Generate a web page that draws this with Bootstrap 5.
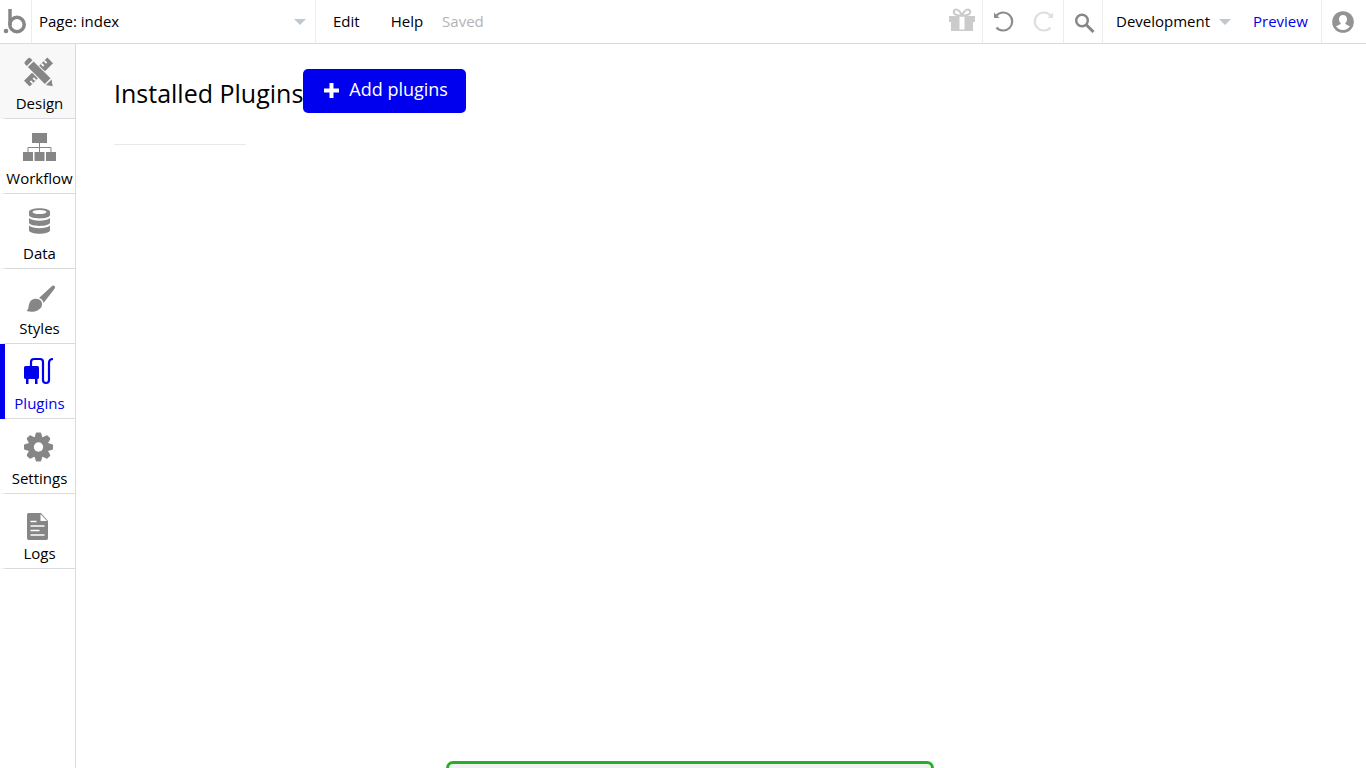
<!DOCTYPE html>
<html lang="en">
<head>
<meta charset="utf-8">
<meta name="viewport" content="width=device-width, initial-scale=1">
<title>Plugins</title>
<link href="https://cdn.jsdelivr.net/npm/bootstrap@5.3.0/dist/css/bootstrap.min.css" rel="stylesheet">
<style>
  :root { --line: #d9dbdc; --soft: #ebeef0; --ink: #868686; --accent: #0000ee; }
  body { font-family: "Open Sans", sans-serif; font-size: 15px; line-height: 20px; color: #000; background: #fff; }
  a { text-decoration: none; color: #000; }
  svg { display: block; flex: none; }
  .topbar { height: 44px; border-bottom: 1px solid var(--line); }
  .cell { height: 100%; display: flex; align-items: center; border-right: 1px solid var(--soft); }
  .plain { border: 0; background: none; padding: 0; color: #000; }
  .logo { width: 32px; padding: 0 0 2px 3px; }
  .picker { width: 284px; }
  .env { width: 128px; padding-left: 13px; }
  .picker select, .env select { appearance: none; border: 0; background: none; width: 100%; height: 100%; padding: 0 0 2px; color: #000; outline: 0; }
  .picker select { padding-left: 7px; }
  .picker svg { right: 9px; }
  .env svg { right: 0; }
  .caret { top: 19px; pointer-events: none; }
  .menu { gap: 31px; padding: 0 0 2px 17px; }
  .saved { color: #b3b3b3; margin-left: 19px; padding-bottom: 2px; }
  .gift { width: 42px; padding: 0 0 3px 8px; }
  .history { width: 81px; padding: 0 0 2px 10px; gap: 19px; }
  .search { width: 39px; padding: 2px 0 0 10px; }
  .preview { color: var(--accent); width: 91px; padding: 0 0 2px 22px; }
  .account { width: 44px; padding-left: 10px; border: 0; }
  .side { width: 76px; border-right: 1px solid var(--line); }
  .tab { height: 75px; display: flex; flex-direction: column; align-items: center; justify-content: space-between; padding: 11px 0 6px 4px; color: #000; fill: var(--ink);
    background: linear-gradient(90deg, #fff, var(--line) 6px) bottom / 100% 1px no-repeat; }
  .tab svg { width: 36px; height: 36px; margin-right: 1px; }
  .tab.hovered { background-color: #f8f8f8; }
  .tab.current { color: var(--accent); fill: var(--accent); box-shadow: inset 5px 0 var(--accent); }
  .content-pane { padding: 25px 38px; }
  h1 { font-size: 25px; line-height: 34px; font-weight: 400; margin: 0; padding-top: 7px; }
  .add { background: var(--accent); color: #fff; height: 44px; border: 0; border-radius: 5px; font-size: 18px; line-height: 24px; padding: 8px 18px 12px 21px; gap: 10px; }
  .add:hover { background: #0000cc; color: #fff; }
  .add svg { margin-top: 2px; }
  .rule { width: 132px; border: 0; border-top: 1px solid #e9e9e9; opacity: 1; margin: 31px 0 0; }
  .notice { width: 488px; height: 7px; left: 446px; border: 3px solid #27ae27; border-bottom: 0; border-radius: 8px 8px 0 0; background: #f0f0f0; }
</style>
</head>
<body class="d-flex flex-column min-vh-100">
<header class="topbar d-flex align-items-center">
  <a class="cell logo" href="#" aria-label="Home">
    <svg width="24" height="26" viewBox="0 0 24 26"><path d="M7 1v16" stroke="#868686" stroke-width="3.500"/><circle cx="14" cy="16.500" r="7.200" stroke="#868686" stroke-width="3.500" fill="none"/><circle cx="3" cy="23" r="2.300" fill="#868686"/></svg>
  </a>
  <div class="cell picker position-relative">
    <select aria-label="Page"><option>Page: index</option></select>
    <svg class="caret position-absolute" width="12" height="6"><path d="M0 0h12L6 6z" fill="#c0c8cf"/></svg>
  </div>
  <nav class="menu d-flex"><a href="#">Edit</a><a href="#">Help</a></nav>
  <span class="saved">Saved</span>
  <div class="cell gift ms-auto">
    <button class="plain" aria-label="Gifts"><svg width="26" height="24" viewBox="0 0 26 24"><path d="M0 8h26v6H0zM2 14h22v9H2z" fill="#cbcbcb"/><path d="M10.500 8.500h5v13h-5z" fill="#fff"/><path d="M13 7.500C11 3 9 1.500 7 1.500S4.500 3.500 5 5s3 2.500 8 2.500C15 3 17 1.500 19 1.500s2.500 2 2 3.500-3 2.500-8 2.500z" fill="none" stroke="#cbcbcb" stroke-width="2.200"/></svg></button>
  </div>
  <div class="cell history">
    <button class="plain" aria-label="Undo"><svg width="21" height="22" viewBox="0 0 21 22"><path d="M3.500 5.500a9 9 0 1 1 0 12" fill="none" stroke="#8c8c8c" stroke-width="2.200"/><path d="M1 2.500v5.500h5.500z" fill="#8c8c8c"/></svg></button>
    <button class="plain" aria-label="Redo" disabled><svg width="21" height="22" viewBox="0 0 21 22"><path d="M17.500 5.500a9 9 0 1 0 0 12" fill="none" stroke="#dedede" stroke-width="2.200"/><path d="M20 2.500v5.500h-5.500z" fill="#dedede"/></svg></button>
  </div>
  <div class="cell search">
    <button class="plain" aria-label="Search"><svg width="21" height="20" viewBox="0 0 21 20"><circle cx="8" cy="7.500" r="5.800" fill="none" stroke="#868686" stroke-width="2.400"/><path d="M12 11.500l7.500 7.500" stroke="#868686" stroke-width="3"/></svg></button>
  </div>
  <div class="env h-100 position-relative">
    <select aria-label="Version"><option>Development</option></select>
    <svg class="caret position-absolute" width="12" height="6"><path d="M0 0h12L6 6z" fill="#c0c8cf"/></svg>
  </div>
  <a class="cell preview" href="#">Preview</a>
  <div class="cell account">
    <button class="plain" aria-label="Account"><svg width="22" height="22" viewBox="0 0 22 22"><circle cx="11" cy="11" r="10.800" fill="#939393"/><path d="M11 4c2.700 0 4 1.800 4 4.200 0 1.800-.8 3.200-1.800 4 .2 1 1 1.400 4.800 3-1.600 2.300-4 3.800-7 3.800s-5.400-1.500-7-3.800c3.800-1.600 4.600-2 4.800-3-1-.8-1.800-2.200-1.800-4C7 5.800 8.300 4 11 4z" fill="#fff"/></svg></button>
  </div>
</header>
<div class="d-flex flex-grow-1">
  <nav class="side flex-shrink-0">
    <a class="tab hovered" href="#"><svg viewBox="0 0 36 36"><g transform="translate(17.500 17)"><path transform="rotate(45)" d="M-4-16.500h8v33h-8z"/><path transform="rotate(45)" d="M-4-12h3.500M-4-8h3.500M4 8H.5M4 12H.5" stroke="#f8f8f8" stroke-width="1.800"/><g transform="rotate(-45)"><path d="M-5-13.500H5V14L0 20-5 14z" fill="#f8f8f8"/><path d="M-4-15q0-2 2-2h4q2 0 2 2v2.500h-8zM-4-11h8v24h-8zM-4 14.500h8L0 20z"/></g></g></svg>Design</a>
    <a class="tab" href="#"><svg viewBox="0 0 36 36"><path d="M11 3h15v10H11zM2 22h10v9H2zM13.500 22h10v9h-10zM25 22h10v9H25z"/><path d="M18.500 13v9M7 22v-4.500h23V22" fill="none" stroke="#868686"/></svg>Workflow</a>
    <a class="tab" href="#"><svg viewBox="0 0 36 36"><path d="M8 7c0-5 21-5 21 0v3c0 4.500-21 4.500-21 0zM8 13c4 3.500 17 3.500 21 0v4.500c0 4.500-21 4.500-21 0zM8 20.500c4 3.500 17 3.500 21 0V25c0 5-21 5-21 0z"/><ellipse cx="18.500" cy="7" rx="7" ry="2" fill="#fff"/></svg>Data</a>
    <a class="tab" href="#"><svg viewBox="0 -1 36 36"><path d="M33.500 5c1 1 .5 2-.5 3.500L22.500 22c-.5-2.500-2-4.500-4.500-5L30.500 5.500c1-1 2-1.500 3-.5zM16.500 18c3 .5 5 3 4.500 6-.7 5-8 8.500-15.500 6 2.500-2 1.500-4 3-8 1.300-3.300 4.500-4.700 8-4z"/></svg>Styles</a>
    <a class="tab current" href="#"><svg viewBox="0 0 36 36"><path d="M3 12.500q0-1.500 1.500-1.500h12q1.500 0 1.500 1.500v10q0 1.500-1.500 1.500v5h-2.500v-5H7.500v5H5v-5q-2 0-2-1.500z"/><path d="M10 12V7q0-3 3-3h6q3 0 3 3V25q0 3 3 3t3-3V8q0-4 4-4" fill="none" stroke="#00e" stroke-width="2.200"/></svg>Plugins</a>
    <a class="tab" href="#"><svg viewBox="0 0 36 36"><g transform="translate(17.500 17)"><path id="tooth" d="M-3-13l.8-1.500h4.400L3-13l1 4h-8zM-3 13l.8 1.500h4.400L3 13l1-4h-8z"/><use href="#tooth" transform="rotate(45)"/><use href="#tooth" transform="rotate(90)"/><use href="#tooth" transform="rotate(135)"/><circle r="10.500"/><circle r="4.700" fill="#fff"/></g></svg>Settings</a>
    <a class="tab" href="#"><svg viewBox="1 -1 36 36"><path d="M7 8.500Q7 7 8.500 7H21l7 8v17q0 2-1.500 2h-18Q7 34 7 32z"/><path d="M20.500 8v7h6.500z" fill="#fff"/><path d="M10.500 15.500h6M10.500 20h14M10.500 24.500h9M10.500 29h14" fill="none" stroke="#fff" stroke-width="1.500"/></svg>Logs</a>
  </nav>
  <main class="content-pane flex-grow-1">
    <div class="d-flex align-items-start">
      <h1>Installed Plugins</h1>
      <button class="add d-flex align-items-center"><svg width="15" height="15" viewBox="0 0 15 15"><path d="M5.500 0h4v5.500H15v4H9.500V15h-4V9.500H0v-4h5.500z" fill="#fff"/></svg>Add plugins</button>
    </div>
    <hr class="rule">
  </main>
</div>
<div class="notice position-fixed bottom-0" role="status"></div>
<script src="https://cdn.jsdelivr.net/npm/bootstrap@5.3.0/dist/js/bootstrap.bundle.min.js"></script>
</body>
</html>
